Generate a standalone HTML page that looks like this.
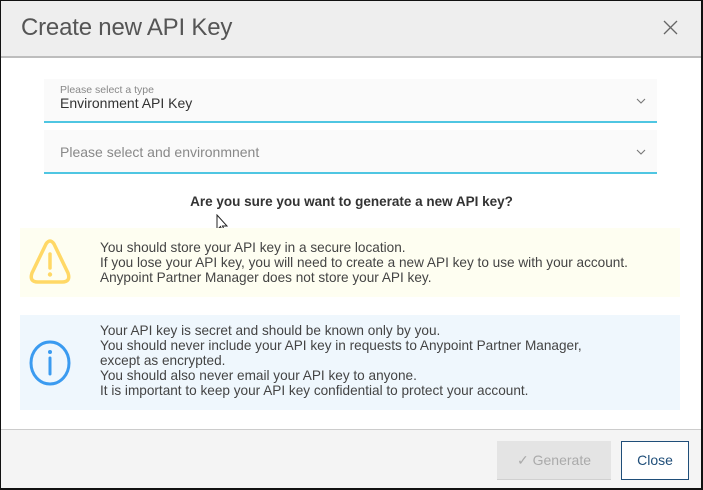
<!DOCTYPE html>
<html><head><meta charset="utf-8"><style>
*{box-sizing:border-box;margin:0;padding:0}
body{width:703px;height:490px;overflow:hidden;background:#fff;font-family:"Liberation Sans",sans-serif;color:#3a3a3a}
.frame{position:absolute;left:0;top:0;width:703px;height:490px;border:1px solid #111;border-right:2px solid #111;border-bottom:2px solid #111}
.hdr{position:absolute;left:1px;top:1px;width:700px;height:57px;background:#eeeeee;border-bottom:2px solid #bdbdbd}
.hdr h1{position:absolute;left:20px;top:13px;font-weight:normal;font-size:24px;color:#555;letter-spacing:-0.2px}
.x{position:absolute;left:662px;top:19px}
.field{position:absolute;left:44px;width:613px;height:44px;background:#fafafa;border-bottom:2px solid #4fc6e2}
.lbl{position:absolute;left:16px;top:5px;font-size:10.5px;color:#888}
.val{position:absolute;left:16px;top:16px;font-size:14px;color:#333}
.ph{position:absolute;left:16px;top:14px;font-size:14px;color:#888}
.chev{position:absolute;left:592px}
.q{position:absolute;left:0;width:703px;top:194px;text-align:center;font-weight:bold;font-size:13.5px;color:#333}
.box{position:absolute;left:20px;width:660px;font-size:13.6px;line-height:15px;color:#444;padding-left:80px;white-space:nowrap}
.y{top:228px;height:69px;background:#fefef1;padding-top:12px}
.b{top:315px;height:95px;background:#eff7fd;padding-top:8px}
.box svg{position:absolute;left:9px}
.ftr{position:absolute;left:1px;top:429px;width:700px;height:59px;background:#f4f4f4;border-top:1px solid #ccc}
.btn{position:absolute;top:441px;height:39px;font-size:14px;text-align:center;line-height:39px}
.gen{left:497px;width:114px;background:#e4e4e4;color:#aaa;border-bottom:1px solid #d0d0d0}
.cls{left:621px;width:68px;background:#fff;border:1px solid #1f4e79;color:#1f4e79;line-height:37px}
</style></head><body>
<div class="hdr"><h1>Create new API Key</h1>
<svg class="x" width="15" height="15" viewBox="0 0 15 15"><path d="M1 1L14 14M14 1L1 14" stroke="#666" stroke-width="1.3"/></svg></div>
<div class="field" style="top:79px"><div class="lbl">Please select a type</div><div class="val">Environment API Key</div>
<svg class="chev" style="top:19px" width="10" height="6" viewBox="0 0 10 6"><path d="M1 1L5 5L9 1" fill="none" stroke="#777" stroke-width="1.1"/></svg></div>
<div class="field" style="top:130px"><div class="ph">Please select and environmnent</div>
<svg class="chev" style="top:19px" width="10" height="6" viewBox="0 0 10 6"><path d="M1 1L5 5L9 1" fill="none" stroke="#777" stroke-width="1.1"/></svg></div>
<div class="q">Are you sure you want to generate a new API key?</div>
<svg style="position:absolute;left:216px;top:214px" width="12" height="20" viewBox="0 0 12 20"><path d="M1 1V16L4.5 12.5L7 18.5L9 17.5L6.5 12H11Z" fill="#fff" stroke="#222" stroke-width="1"/></svg>
<div class="box y"><svg style="top:11px" width="42" height="46" viewBox="0 0 42 46"><path d="M17 5Q21 -1 25 5L39 34Q42 43 33 43H9Q0 43 3 34Z" fill="none" stroke="#ffd866" stroke-width="3.5" stroke-linejoin="round"/><path d="M21 15V29" stroke="#ffd866" stroke-width="3.5" stroke-linecap="round"/><circle cx="21" cy="35.5" r="2.2" fill="#ffd866"/></svg>
You should store your API key in a secure location.<br>If you lose your API key, you will need to create a new API key to use with your account.<br>Anypoint Partner Manager does not store your API key.</div>
<div class="box b"><svg style="top:25px" width="42" height="46" viewBox="0 0 42 46"><ellipse cx="21" cy="23" rx="19" ry="21" fill="none" stroke="#3b9bf0" stroke-width="3"/><circle cx="21" cy="12" r="2" fill="#3b9bf0"/><path d="M21 18V34" stroke="#3b9bf0" stroke-width="3" stroke-linecap="round"/></svg>
Your API key is secret and should be known only by you.<br>You should never include your API key in requests to Anypoint Partner Manager,<br>except as encrypted.<br>You should also never email your API key to anyone.<br>It is important to keep your API key confidential to protect your account.</div>
<div class="ftr"></div>
<div class="btn gen">✓ Generate</div>
<div class="btn cls">Close</div>
<div class="frame"></div>
</body></html>
